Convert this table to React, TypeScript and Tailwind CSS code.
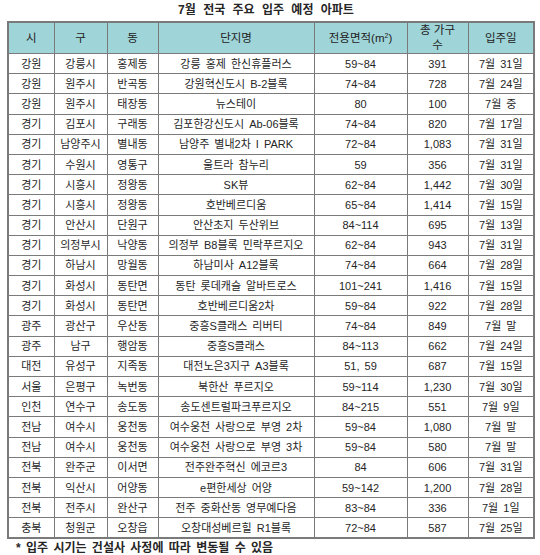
const rows: string[][] = [
  ['강원', '강릉시', '홍제동', '강릉 홍제 한신휴플러스', '59~84', '391', '7월 31일'],
  ['강원', '원주시', '반곡동', '강원혁신도시 B-2블록', '74~84', '728', '7월 24일'],
  ['강원', '원주시', '태장동', '뉴스테이', '80', '100', '7월 중'],
  ['경기', '김포시', '구래동', '김포한강신도시 Ab-06블록', '74~84', '820', '7월 17일'],
  ['경기', '남양주시', '별내동', '남양주 별내2차 I PARK', '72~84', '1,083', '7월 31일'],
  ['경기', '수원시', '영통구', '울트라 참누리', '59', '356', '7월 31일'],
  ['경기', '시흥시', '정왕동', 'SK뷰', '62~84', '1,442', '7월 30일'],
  ['경기', '시흥시', '정왕동', '호반베르디움', '65~84', '1,414', '7월 15일'],
  ['경기', '안산시', '단원구', '안산초지 두산위브', '84~114', '695', '7월 13일'],
  ['경기', '의정부시', '낙양동', '의정부 B8블록 민락푸르지오', '62~84', '943', '7월 31일'],
  ['경기', '하남시', '망월동', '하남미사 A12블록', '74~84', '664', '7월 28일'],
  ['경기', '화성시', '동탄면', '동탄 롯데캐슬 알바트로스', '101~241', '1,416', '7월 15일'],
  ['경기', '화성시', '동탄면', '호반베르디움2차', '59~84', '922', '7월 28일'],
  ['광주', '광산구', '우산동', '중흥S클래스 리버티', '74~84', '849', '7월 말'],
  ['광주', '남구', '행암동', '중흥S클래스', '84~113', '662', '7월 24일'],
  ['대전', '유성구', '지족동', '대전노은3지구 A3블록', '51, 59', '687', '7월 15일'],
  ['서울', '은평구', '녹번동', '북한산 푸르지오', '59~114', '1,230', '7월 30일'],
  ['인천', '연수구', '송도동', '송도센트럴파크푸르지오', '84~215', '551', '7월 9일'],
  ['전남', '여수시', '웅천동', '여수웅천 사랑으로 부영 2차', '59~84', '1,080', '7월 말'],
  ['전남', '여수시', '웅천동', '여수웅천 사랑으로 부영 3차', '59~84', '580', '7월 말'],
  ['전북', '완주군', '이서면', '전주완주혁신 에코르3', '84', '606', '7월 31일'],
  ['전북', '익산시', '어양동', 'e편한세상 어양', '59~142', '1,200', '7월 28일'],
  ['전북', '전주시', '완산구', '전주 중화산동 영무예다음', '83~84', '336', '7월 1일'],
  ['충북', '청원군', '오창읍', '오창대성베르힐 R1블록', '72~84', '587', '7월 25일'],
];

const th = 'border border-[#7a7a7a] font-normal text-[11.5px] leading-[15px] text-[#222]';
const td = 'border border-[#7a7a7a] p-0 text-center whitespace-nowrap';

export default function App() {
  return (
    <div className="w-[540px] h-[555px] bg-white text-[#262626] font-['Liberation_Sans','Noto_Sans_CJK_KR',sans-serif] overflow-hidden">
      <div className="h-[21px] pt-[2px] text-center text-[12px] leading-[16px] font-bold [word-spacing:4px]">
        <span className="relative -left-[4px]">7월 전국 주요 입주 예정 아파트</span>
      </div>
      <table className="ml-[7px] w-[526px] table-fixed border-collapse border-2 border-[#7a7a7a]">
        <colgroup>
          <col className="w-[46px]" />
          <col className="w-[53px]" />
          <col className="w-[51px]" />
          <col className="w-[156px]" />
          <col className="w-[93px]" />
          <col className="w-[61px]" />
          <col className="w-[66px]" />
        </colgroup>
        <thead>
          <tr className="h-[31px] bg-[#9fd4d8]">
            <th className={th}>시</th>
            <th className={th}>구</th>
            <th className={th}>동</th>
            <th className={th}>단지명</th>
            <th className={th}>
              전용면적(m<sup className="text-[7px]">2</sup>)
            </th>
            <th className={th}>
              총 가구
              <br />수
            </th>
            <th className={th}>입주일</th>
          </tr>
        </thead>
        <tbody className="text-[11px] leading-[12px] [word-spacing:2px]">
          {rows.map((r, i) => (
            <tr key={i} className="h-[20.2px]">
              {r.map((c, j) => (
                <td key={j} className={td}>
                  {c}
                </td>
              ))}
            </tr>
          ))}
        </tbody>
      </table>
      <div className="mt-[2px] pl-[16px] text-[12px] leading-[15px] font-bold [word-spacing:2px]">
        * 입주 시기는 건설사 사정에 따라 변동될 수 있음
      </div>
    </div>
  );
}
